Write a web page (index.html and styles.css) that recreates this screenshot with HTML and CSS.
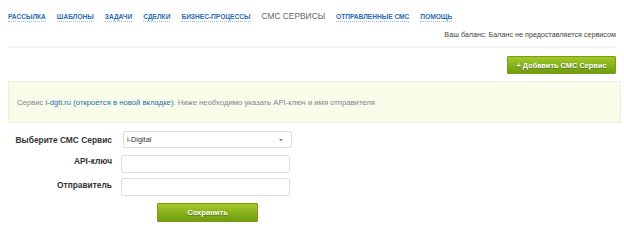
FILE: index.html
```html
<!DOCTYPE html>
<html lang="ru">
<head>
    <meta charset="UTF-8">
    <title>СМС Сервисы</title>
    <link rel="stylesheet" href="styles.css">
</head>
<body>
    <div class="tabs">
        <a href="#">Рассылка</a>
        <a href="#">Шаблоны</a>
        <a href="#">Задачи</a>
        <a href="#">Сделки</a>
        <a href="#">Бизнес-процессы</a>
        <span class="current">СМС Сервисы</span>
        <a href="#">Отправленные СМС</a>
        <a href="#">Помощь</a>
    </div>

    <div class="balance">Ваш баланс: Баланс не предоставляется сервисом</div>

    <div class="toolbar">
        <button class="btn btn-add">+ Добавить СМС Сервис</button>
    </div>

    <div class="notice">
        <p>Сервис <a href="#">i-dgtl.ru (откроется в новой вкладке)</a>. Ниже необходимо указать API-ключ и имя отправителя</p>
    </div>

    <div class="form">
        <label>Выберите СМС Сервис</label>
        <div class="select">i-Digital<span class="arrow"></span></div>

        <label>API-ключ</label>
        <input type="text" class="field">

        <label>Отправитель</label>
        <input type="text" class="field">

        <span></span>
        <div class="save-row">
            <button class="btn btn-save">Сохранить</button>
        </div>
    </div>
</body>
</html>
```

FILE: styles.css
```css
body {
    margin: 0;
    padding: 0 8px;
    font-family: "Liberation Sans", Arial, sans-serif;
    background: #fff;
    color: #333;
}
.tabs {
    display: flex;
    gap: 11px;
    padding-top: 11px;
    height: 11px;
    align-items: baseline;
}
.tabs a {
    font-size: 6.6px;
    font-weight: bold;
    text-transform: uppercase;
    color: #2a6cb6;
    text-decoration: none;
    border-bottom: 1px dotted #9dbde0;
    padding-bottom: 1px;
}
.tabs .current {
    font-size: 8.4px;
    text-transform: uppercase;
    color: #666;
}
.balance {
    text-align: right;
    font-size: 7.2px;
    color: #444;
    padding-top: 8px;
    height: 16px;
    border-bottom: 2px solid #f4f4f4;
}
.toolbar {
    display: flex;
    justify-content: flex-end;
    padding-top: 8px;
    height: 25px;
}
.btn {
    font-family: "Liberation Sans", Arial, sans-serif;
    font-weight: bold;
    color: #fff;
    border: 1px solid #76a012;
    border-radius: 1px;
    background: linear-gradient(#a3c928, #6f9c10);
    text-shadow: 0 1px 1px rgba(0, 0, 0, 0.35);
    cursor: pointer;
}
.btn-add {
    height: 18px;
    width: 109px;
    font-size: 7.4px;
    padding: 0;
}
.notice {
    background: #f8fce9;
    border: 1px solid #eaf0dc;
    height: 40px;
    padding: 0 8px;
    display: flex;
    align-items: center;
    font-size: 7.7px;
    color: #7b8893;
    margin-right: -5px;
}
.notice p {
    margin: 0;
}
.notice a {
    color: #2e6eb0;
    text-decoration: none;
}
.form {
    display: grid;
    grid-template-columns: 104px 170px;
    column-gap: 9px;
    align-items: center;
    margin-top: 8px;
}
.form label {
    text-align: right;
    font-size: 8.4px;
    font-weight: bold;
    color: #333;
}
.select {
    position: relative;
    box-sizing: border-box;
    height: 17px;
    width: 169px;
    margin-left: 2px;
    border: 1px solid #ddd;
    border-radius: 2px;
    font-size: 7.3px;
    color: #333;
    display: flex;
    align-items: center;
    padding-left: 3px;
}
.arrow {
    position: absolute;
    right: 8px;
    top: 7px;
    border-left: 2px solid transparent;
    border-right: 2px solid transparent;
    border-top: 2px solid #777;
}
.field {
    box-sizing: border-box;
    height: 18px;
    width: 169px;
    border: 1px solid #ddd;
    border-radius: 2px;
    margin: 0;
}
.form .field:nth-of-type(1) {
    margin-top: 7px;
}
.form .field:nth-of-type(2) {
    margin-top: 5px;
}
.save-row {
    margin-top: 5px;
    padding-left: 36px;
}
.btn-save {
    width: 101px;
    height: 19px;
    font-size: 7.6px;
    padding: 0;
}
```
